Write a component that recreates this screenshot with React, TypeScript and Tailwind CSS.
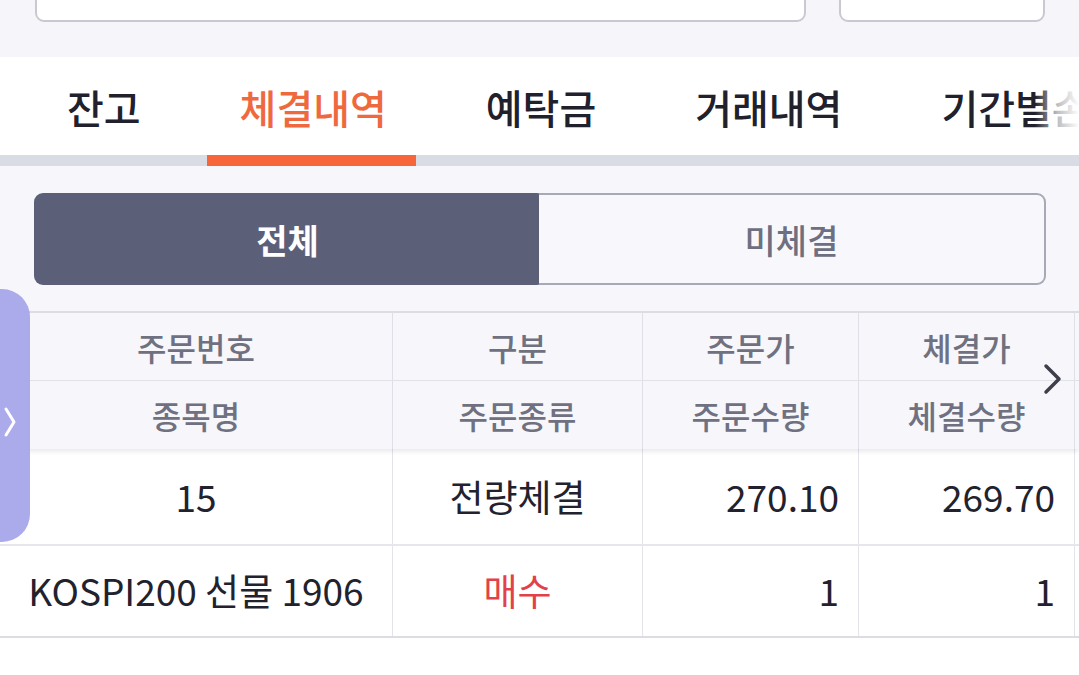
import React from 'react';

const tabs = ['잔고', '체결내역', '예탁금', '거래내역', '기간별손익'];

const headerTop = ['주문번호', '구분', '주문가', '체결가'];
const headerBottom = ['종목명', '주문종류', '주문수량', '체결수량'];

function HeaderCell({ children, last }: { children?: React.ReactNode; last?: boolean }) {
  return (
    <div
      className={`flex items-center justify-center text-[32px] font-medium text-[#6f7181] ${
        last ? '' : 'border-r border-[#dfdfe7]'
      }`}
    >
      {children}
    </div>
  );
}

function BodyCell({
  children,
  align = 'center',
  className = '',
  last,
}: {
  children?: React.ReactNode;
  align?: 'center' | 'right';
  className?: string;
  last?: boolean;
}) {
  return (
    <div
      className={`flex items-center ${
        align === 'right' ? 'justify-end pr-[19px]' : 'justify-center'
      } ${last ? '' : 'border-r border-[#e3e3ea]'} ${className}`}
    >
      {children}
    </div>
  );
}

export default function App() {
  return (
    <div
      className="relative w-[1079px] h-[675px] overflow-hidden bg-white"
      style={{ fontFamily: '"Noto Sans CJK KR", "Noto Sans", sans-serif' }}
    >
      {/* search inputs (cut at the top) */}
      <div className="h-[57px] bg-[#f6f6fa] flex items-start">
        <div className="ml-[35px] w-[771px] h-[60px] -mt-[38px] rounded-[9px] border-2 border-[#c9c9d1] bg-white" />
        <div className="ml-[33px] w-[206px] h-[60px] -mt-[38px] rounded-[9px] border-2 border-[#c9c9d1] bg-white" />
      </div>

      {/* tabs */}
      <div className="relative h-[98px] bg-white flex items-center pl-[36px] gap-[37px] whitespace-nowrap overflow-hidden">
        {tabs.map((t, i) => (
          <div
            key={t}
            className={`shrink-0 px-[31px] pt-[2px] text-[40px] font-medium ${
              i === 1 ? 'text-[#ef693f]' : 'text-[#20212c]'
            }`}
          >
            {t}
          </div>
        ))}
        <div className="absolute right-0 top-0 h-full w-[44px] bg-gradient-to-r from-white/0 via-white/70 to-white" />
      </div>
      <div className="h-[11px] bg-[#d9dce4] flex">
        <div className="ml-[207px] w-[209px] bg-[#f7653b]" />
      </div>

      {/* segmented control */}
      <div className="bg-[#f7f7fb] pt-[27px] pb-[26px] px-[34px]">
        <div className="flex h-[92px] w-[1012px]">
          <div className="w-[507px] rounded-l-[9px] rounded-r-[4px] bg-[#5b6078] flex items-center justify-center text-[34px] font-bold text-white">
            전체
          </div>
          <div className="flex-1 -ml-[2px] rounded-r-[9px] border-2 border-l-0 border-[#a7a9b7] bg-[#f8f8fc] flex items-center justify-center text-[34px] font-medium text-[#6e7081]">
            미체결
          </div>
        </div>
      </div>

      {/* table */}
      <div className="relative bg-[#f7f7fb]">
        <div className="border-t-2 border-[#dcdce3] bg-[#f6f6fb] shadow-[0_3px_4px_rgba(0,0,0,0.08)] relative z-10">
          <div className="grid grid-cols-[393px_250px_216px_216px_1fr] h-[68px] border-b border-[#e1e1e8]">
            {headerTop.map((h) => (
              <HeaderCell key={h}>{h}</HeaderCell>
            ))}
            <HeaderCell last />
          </div>
          <div className="grid grid-cols-[393px_250px_216px_216px_1fr] h-[68px]">
            {headerBottom.map((h) => (
              <HeaderCell key={h}>{h}</HeaderCell>
            ))}
            <HeaderCell last />
          </div>
        </div>
        <div className="bg-white text-[37px] text-[#22222e]">
          <div className="grid grid-cols-[393px_250px_216px_216px_1fr] h-[97px] border-b-2 border-[#e6e6ec]">
            <BodyCell>15</BodyCell>
            <BodyCell>전량체결</BodyCell>
            <BodyCell align="right">270.10</BodyCell>
            <BodyCell align="right">269.70</BodyCell>
            <BodyCell last />
          </div>
          <div className="grid grid-cols-[393px_250px_216px_216px_1fr] h-[92px] border-b-2 border-[#dcdce2]">
            <BodyCell>KOSPI200 선물 1906</BodyCell>
            <BodyCell className="text-[#e2414b]">매수</BodyCell>
            <BodyCell align="right">1</BodyCell>
            <BodyCell align="right">1</BodyCell>
            <BodyCell last />
          </div>
        </div>
      </div>

      {/* side drawer handle */}
      <div className="absolute left-0 top-[289px] z-20 w-[30px] h-[253px] rounded-r-[28px] bg-[#a6a5e9]/95 flex items-center pl-[3px] pt-[12px]">
        <svg width="14" height="32" viewBox="0 0 14 32" fill="none">
          <path d="M3 3 L11 16 L3 29" stroke="white" strokeWidth="3" strokeLinecap="round" strokeLinejoin="round" />
        </svg>
      </div>

      {/* scroll right chevron */}
      <svg
        className="absolute left-[1042px] top-[362px] z-20"
        width="22"
        height="34"
        viewBox="0 0 22 34"
        fill="none"
      >
        <path d="M4 4 L17 17 L4 30" stroke="#3e3f4a" strokeWidth="3.5" strokeLinecap="round" strokeLinejoin="round" />
      </svg>
    </div>
  );
}
